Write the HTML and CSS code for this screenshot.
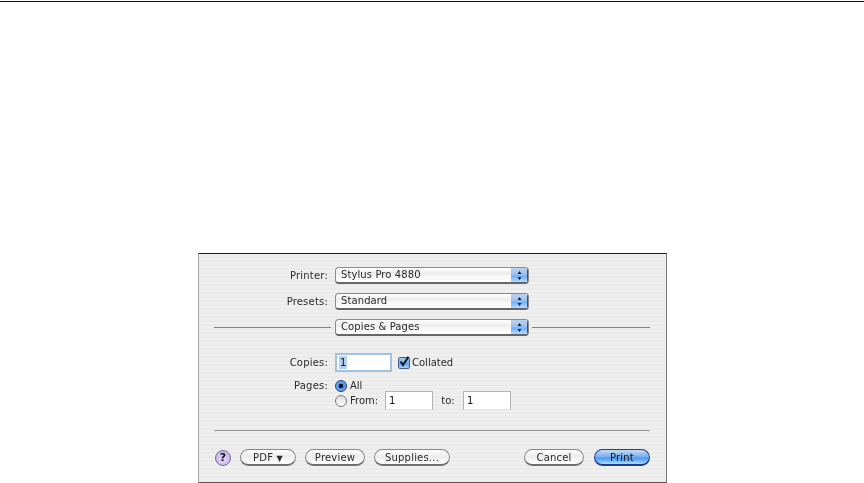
FILE: index.html
```html
<!DOCTYPE html>
<html lang="en">
<head>
    <meta charset="UTF-8">
    <meta name="viewport" content="width=device-width, initial-scale=1.0">
    <title>Print</title>
    <link rel="stylesheet" href="styles.css">
</head>
<body>
    <div class="toprule"></div>
    <div class="dialog">
        <div class="row row-printer">
            <span class="label">Printer:</span>
            <div class="popup"><span class="popup-text">Stylus Pro 4880</span><span class="stepper"><svg width="5" height="11" viewBox="0 0 5 11"><path d="M2.5 1 L4.5 4 H0.5 Z M2.5 10 L4.5 7 H0.5 Z" fill="#10203a"/></svg></span></div>
        </div>
        <div class="row row-presets">
            <span class="label">Presets:</span>
            <div class="popup"><span class="popup-text">Standard</span><span class="stepper"><svg width="5" height="11" viewBox="0 0 5 11"><path d="M2.5 1 L4.5 4 H0.5 Z M2.5 10 L4.5 7 H0.5 Z" fill="#10203a"/></svg></span></div>
        </div>
        <div class="row row-panel">
            <span class="line line-left"></span>
            <div class="popup"><span class="popup-text">Copies &amp; Pages</span><span class="stepper"><svg width="5" height="11" viewBox="0 0 5 11"><path d="M2.5 1 L4.5 4 H0.5 Z M2.5 10 L4.5 7 H0.5 Z" fill="#10203a"/></svg></span></div>
            <span class="line line-right"></span>
        </div>

        <div class="row row-copies">
            <span class="label">Copies:</span>
            <div class="field field-copies"><span class="selected">1</span></div>
            <span class="check"><svg width="12" height="12" viewBox="0 0 12 12"><path d="M2.5 5.5 L5 9 L10.5 0.8" fill="none" stroke="#0a1430" stroke-width="2"/></svg></span>
            <span class="check-text">Collated</span>
        </div>
        <div class="row row-pages">
            <span class="label">Pages:</span>
            <div class="pages">
                <div class="page-opt page-all"><span class="radio radio-on"></span><span>All</span></div>
                <div class="page-opt page-from">
                    <span class="radio"></span><span class="from-text">From:</span>
                    <div class="field field-small">1</div>
                    <span class="to-text">to:</span>
                    <div class="field field-small">1</div>
                </div>
            </div>
        </div>

        <div class="divider"></div>

        <div class="buttons">
            <span class="help">?</span>
            <button class="btn btn-pdf">PDF <span class="pdf-arrow">▼</span></button>
            <button class="btn btn-preview">Preview</button>
            <button class="btn btn-supplies">Supplies...</button>
            <span class="spacer"></span>
            <button class="btn btn-cancel">Cancel</button>
            <button class="btn btn-print">Print</button>
        </div>
    </div>
</body>
</html>
```

FILE: styles.css
```css
body {
    margin: 0;
    background-color: white;
    font-family: "DejaVu Sans", sans-serif;
    font-size: 10px;
    color: #2a2a2a;
}
.toprule {
    height: 1px;
    margin-top: 1px;
    background-color: #111;
}
.dialog {
    box-sizing: border-box;
    width: 469px;
    height: 230px;
    margin-top: 251px;
    margin-left: 198px;
    padding: 13px 15px 0 15px;
    border-top: 1px solid #222;
    border-left: 1px solid #a8a8a8;
    border-right: 1px solid #777;
    border-bottom: 1px solid #555;
    background: repeating-linear-gradient(to bottom, #efefef 0, #efefef 2px, #ebebeb 2px, #ebebeb 4px);
}
.row {
    display: flex;
    align-items: center;
    filter: blur(0.3px);
}
.row-presets {
    margin-top: 9px;
}
.row-panel {
    margin-top: 9px;
}
.label {
    width: 114px;
    margin-right: 7px;
    text-align: right;
    white-space: nowrap;
    letter-spacing: 0.2px;
}
.popup {
    box-sizing: border-box;
    display: flex;
    justify-content: space-between;
    width: 194px;
    height: 17px;
    border: 1px solid #8a8a8a;
    border-bottom: 2px solid #666;
    border-radius: 4px;
    background: linear-gradient(to bottom, #ffffff 0, #ececec 40%, #f6f6f6 55%, #ffffff 100%);
    overflow: hidden;
}
.popup-text {
    padding-left: 5px;
    line-height: 14px;
    letter-spacing: 0.1px;
}
.stepper {
    display: flex;
    align-items: center;
    justify-content: center;
    width: 16px;
    background: linear-gradient(to bottom, #b9d0f0 0, #a6c4ee 40%, #76b2f6 60%, #b4daFc 100%);
    border-right: 1px solid #2c52ac;
}
.line {
    height: 1px;
    background-color: #808080;
}
.line-left {
    width: 117px;
    margin-right: 4px;
}
.line-right {
    width: 118px;
    margin-left: 3px;
}
.row-copies {
    margin-top: 17px;
}
.field {
    box-sizing: border-box;
    height: 19px;
    padding-left: 3px;
    line-height: 17px;
    background-color: white;
    border: 1px solid #b4b4b4;
    border-bottom-color: #e2e2e2;
    color: #111;
}
.field-copies {
    width: 57px;
    border: 2px solid #a3c2e2;
    padding-left: 2px;
    line-height: 15px;
}
.selected {
    background-color: #b5d0f0;
    padding: 1px 1px;
}
.check {
    box-sizing: border-box;
    display: flex;
    width: 12px;
    height: 12px;
    margin-left: 6px;
    border: 1px solid #44618c;
    border-radius: 2px;
    background: linear-gradient(to bottom, #a8c8f0, #6ba8ec 60%, #a8d2fa);
}
.check svg {
    margin: -2px 0 0 -1px;
    overflow: visible;
}
.check-text {
    margin-left: 2px;
}
.row-pages {
    align-items: flex-start;
    margin-top: 8px;
}
.row-pages .label {
    line-height: 11px;
}
.page-opt {
    display: flex;
    align-items: center;
}
.page-all {
    height: 11px;
}
.radio {
    box-sizing: border-box;
    flex: none;
    width: 12px;
    height: 12px;
    margin-right: 3px;
    border: 1px solid #777;
    border-radius: 50%;
    background: linear-gradient(to bottom, #dcdcdc, #ffffff);
}
.radio-on {
    border-color: #1c3f7c;
    background: radial-gradient(circle, #0a1430 0, #0a1430 2px, #4f8fe0 2.5px, #8fbcf0 100%);
}
.page-from {
    height: 19px;
}
.from-text {
    width: 35px;
}
.field-small {
    width: 48px;
    font-size: 10px;
}
.to-text {
    width: 30px;
    text-align: center;
}
.divider {
    height: 1px;
    margin-top: 20px;
    background-color: #909090;
    width: 436px;
}
.buttons {
    display: flex;
    align-items: center;
    margin-top: 18px;
    margin-right: 1px;
    padding-left: 1px;
    filter: blur(0.3px);
}
.help {
    box-sizing: border-box;
    width: 16px;
    height: 16px;
    margin-right: 9px;
    border: 1px solid #6a6a9a;
    border-radius: 50%;
    background: radial-gradient(circle at 50% 60%, #e6d8fb, #c0a8ee);
    text-align: center;
    font-size: 11px;
    font-weight: bold;
    line-height: 14px;
    color: #111;
}
.btn {
    box-sizing: border-box;
    height: 17px;
    padding: 0;
    font-family: "DejaVu Sans", sans-serif;
    font-size: 10px;
    color: #2a2a2a;
    letter-spacing: 0.2px;
    border: 1px solid #888;
    border-bottom: 2px solid #707070;
    border-radius: 9px;
    background: linear-gradient(to bottom, #ffffff 0, #ececec 45%, #f6f6f6 70%, #ffffff 100%);
}
.pdf-arrow {
    font-size: 8px;
}
.btn-pdf {
    width: 56px;
    margin-right: 9px;
}
.btn-preview {
    width: 60px;
    margin-right: 9px;
}
.btn-supplies {
    width: 76px;
}
.spacer {
    flex: 1;
}
.btn-cancel {
    width: 60px;
    margin-right: 10px;
}
.btn-print {
    width: 56px;
    border-color: #1a3f8c;
    background: linear-gradient(to bottom, #c4dcf6 0, #7fb0ec 45%, #4f9cf4 60%, #a8dcfc 100%);
    color: #111;
}
```
